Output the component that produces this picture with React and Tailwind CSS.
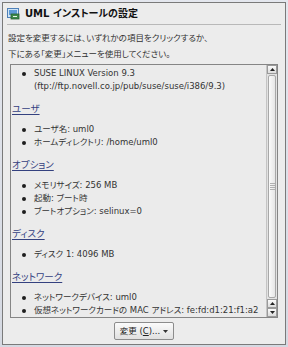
import React from 'react';

const sections = [
  { title: 'ユーザ', items: ['ユーザ名: uml0', 'ホームディレクトリ: /home/uml0'] },
  { title: 'オプション', items: ['メモリサイズ: 256 MB', '起動: ブート時', 'ブートオプション: selinux=0'] },
  { title: 'ディスク', items: ['ディスク 1: 4096 MB'] },
  { title: 'ネットワーク', items: ['ネットワークデバイス: uml0', '仮想ネットワークカードの MAC アドレス: fe:fd:d1:21:f1:a2'] },
];

const font = { fontFamily: '"DejaVu Sans", "Noto Sans CJK JP", sans-serif', fontFeatureSettings: '"palt"' };

function Bullet({ children }) {
  return (
    <li className="flex items-center h-[13px] pl-[10px] whitespace-nowrap">
      <span className="w-[4px] h-[4px] rounded-full bg-[#1e1e1e] mr-[8px] shrink-0" />
      <span>{children}</span>
    </li>
  );
}

function Arrow({ down }) {
  return (
    <div className="h-[9px] border border-[#9a9a9a] bg-gradient-to-b from-[#fbfbfb] to-[#dcdcdc] flex items-center justify-center">
      <svg width="5" height="3" viewBox="0 0 5 3">
        <path d={down ? 'M0 0h5L2.5 3z' : 'M0 3h5L2.5 0z'} fill="#222" />
      </svg>
    </div>
  );
}

export default function App() {
  return (
    <div className="w-[288px] h-[347px] p-[2px] bg-gradient-to-b from-[#e4e7ee] to-[#d5d9e2]" style={font}>
      <div className="h-full border border-[#7a7a7a] bg-[#ececec] flex flex-col text-[#2a2a2a]">
        <div className="mx-[4px] mt-[3px] h-[19px] flex items-center gap-[5px] border-b border-[#b8b8b8] pb-[2px]">
          <svg width="13" height="12" viewBox="0 0 13 12">
            <rect x="0.5" y="0.5" width="11" height="9" fill="#cfe3f5" stroke="#4d7fb8" />
            <rect x="2" y="2" width="8" height="5" fill="#5c9ad6" />
            <rect x="4" y="6" width="8" height="5" fill="#3d8a4a" stroke="#2a5e33" strokeWidth="0.8" />
            <rect x="6" y="8" width="4" height="1" fill="#e8f4e8" />
          </svg>
          <span className="text-[10px] font-bold text-[#111] leading-none">UML インストールの設定</span>
        </div>

        <div className="px-[5px] mt-[5px] text-[8.5px] leading-[16px] text-[#333]">
          <div>設定を変更するには、いずれかの項目をクリックするか、</div>
          <div>下にある「変更」メニューを使用してください。</div>
        </div>

        <div className="mx-[7px] mt-[2px] h-[254px] border border-[#858585] bg-[#ebebeb] flex">
          <div className="flex-1 pt-[2px] pl-[1px] text-[8.5px] text-[#333] overflow-hidden">
            <ul>
              <li className="flex pl-[10px] leading-[13px] whitespace-nowrap">
                <span className="w-[4px] h-[4px] rounded-full bg-[#1e1e1e] mr-[8px] mt-[5px] shrink-0" />
                <span>
                  SUSE LINUX Version 9.3
                  <br />
                  (ftp://ftp.novell.co.jp/pub/suse/suse/i386/9.3)
                </span>
              </li>
            </ul>
            {sections.map((s) => (
              <div key={s.title} className="mt-[9px]">
                <div className="h-[14px] leading-[14px] text-[9.5px] text-[#34417f] underline underline-offset-2">{s.title}</div>
                <ul className="mt-[7px]">
                  {s.items.map((it) => (
                    <Bullet key={it}>{it}</Bullet>
                  ))}
                </ul>
              </div>
            ))}
          </div>
          <div className="w-[11px] flex flex-col border-l border-[#c4c4c4] bg-[#e2e2e2]">
            <Arrow />
            <div className="flex-1 mx-[1px] my-[1px] border border-[#a8a8a8] rounded-[2px] bg-gradient-to-r from-[#fafafa] to-[#e6e6e6] flex items-center justify-center">
              <div className="flex flex-col gap-[1px]">
                <div className="w-[5px] h-[1px] bg-[#b0b0b0]" />
                <div className="w-[5px] h-[1px] bg-[#b0b0b0]" />
                <div className="w-[5px] h-[1px] bg-[#b0b0b0]" />
                <div className="w-[5px] h-[1px] bg-[#b0b0b0]" />
              </div>
            </div>
            <Arrow />
            <Arrow down />
          </div>
        </div>

        <div className="mt-[4px] flex justify-center">
          <button className="h-[18px] px-[5px] border border-[#8c8c8c] rounded-[2px] bg-gradient-to-b from-[#fbfbfb] to-[#e0e0e0] text-[8.5px] text-[#222] flex items-center gap-[3px]">
            <span>
              変更 (<span className="underline">C</span>)...
            </span>
            <svg width="5" height="3" viewBox="0 0 5 3">
              <path d="M0 0h5L2.5 3z" fill="#333" />
            </svg>
          </button>
        </div>
      </div>
    </div>
  );
}
